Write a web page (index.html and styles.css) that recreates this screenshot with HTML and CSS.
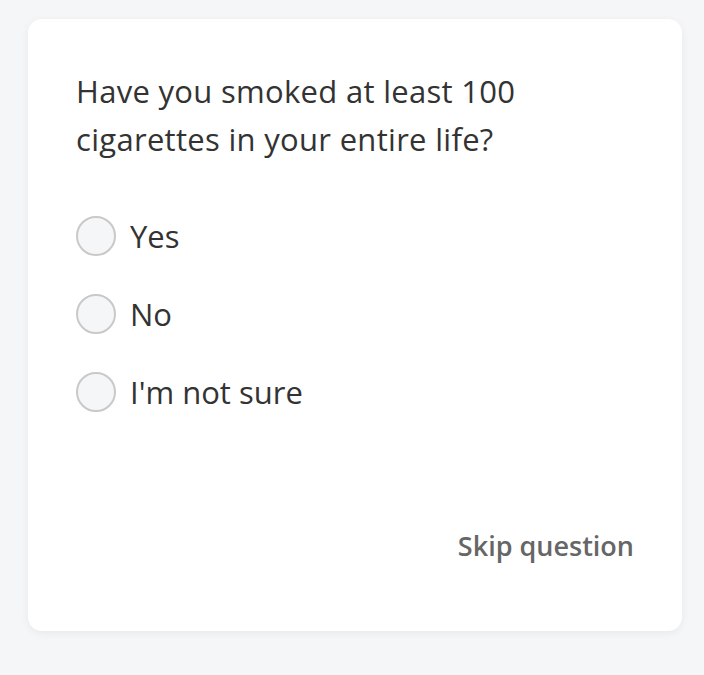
FILE: index.html
```html
<!DOCTYPE html>
<html>
<head>
<meta charset="utf-8">
<link rel="stylesheet" href="styles.css">
</head>
<body>
<div class="card">
  <h1 class="question">Have you smoked at least 100 cigarettes in your entire life?</h1>
  <div class="options">
    <label class="option"><span class="radio"></span><span class="label">Yes</span></label>
    <label class="option"><span class="radio"></span><span class="label">No</span></label>
    <label class="option"><span class="radio"></span><span class="label">I'm not sure</span></label>
  </div>
  <div class="footer"><span class="skip">Skip question</span></div>
</div>
</body>
</html>
```
FILE: styles.css
```css
html, body { margin: 0; padding: 0; }
body {
  background: #f5f6f8;
  font-family: "Open Sans", "Noto Sans", sans-serif;
  color: #333;
  width: 704px;
  height: 675px;
  overflow: hidden;
}
.card {
  box-sizing: border-box;
  margin: 19px 0 0 28px;
  width: 654px;
  height: 612px;
  background: #fff;
  border-radius: 14px;
  box-shadow: 0 2px 8px rgba(0,0,0,0.06);
  padding: 48px 48px 0 48px;
  display: flex;
  flex-direction: column;
}
.question {
  margin: 0;
  font-weight: 400;
  font-size: 31px;
  line-height: 48px;
  letter-spacing: 0.3px;
  width: 480px;
}
.options {
  margin-top: 53px;
  display: flex;
  flex-direction: column;
  gap: 38px;
}
.option {
  display: flex;
  align-items: center;
  gap: 14px;
  height: 40px;
}
.radio {
  box-sizing: border-box;
  flex: none;
  width: 40px;
  height: 40px;
  border-radius: 50%;
  border: 2px solid #c9c9c9;
  background: #f5f6f8;
}
.label { font-size: 31px; line-height: 40px; }
.footer {
  margin-top: auto;
  padding-bottom: 67px;
  display: flex;
  justify-content: flex-end;
}
.skip {
  font-size: 27px;
  line-height: 36px;
  font-weight: 600;
  color: #666;
}
```
